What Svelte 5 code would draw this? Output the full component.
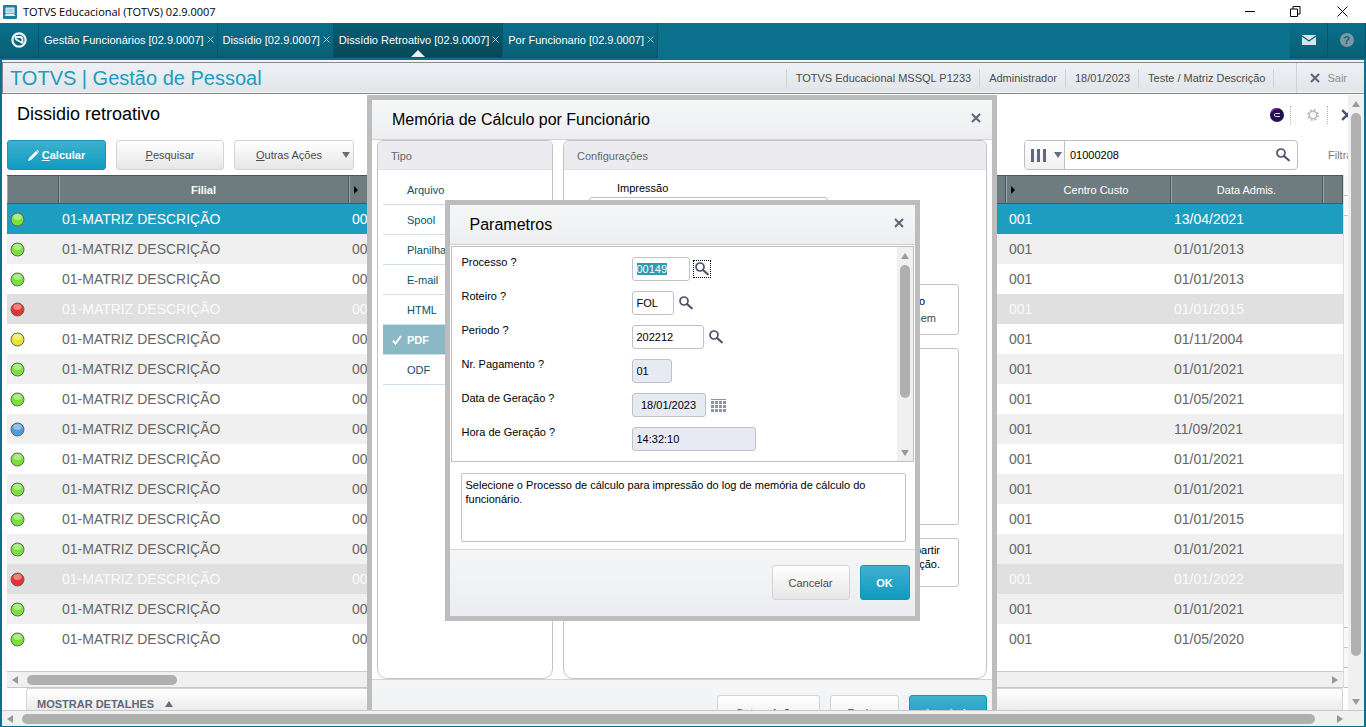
<script lang="ts">
  import { onMount } from "svelte";

  type Status = "green" | "red" | "yellow" | "blue";
  interface Row {
    status: Status;
    date: string;
    selected?: boolean;
  }

  const tabs = [
    { title: "Gestão Funcionários [02.9.0007]", active: false },
    { title: "Dissídio [02.9.0007]", active: false },
    { title: "Dissídio Retroativo [02.9.0007]", active: true },
    { title: "Por Funcionario [02.9.0007]", active: false },
  ];

  const session = ["TOTVS Educacional MSSQL P1233", "Administrador", "18/01/2023", "Teste / Matriz Descrição"];

  const rows: Row[] = [
    { status: "green", date: "13/04/2021", selected: true },
    { status: "green", date: "01/01/2013" },
    { status: "green", date: "01/01/2013" },
    { status: "red", date: "01/01/2015" },
    { status: "yellow", date: "01/11/2004" },
    { status: "green", date: "01/01/2021" },
    { status: "green", date: "01/05/2021" },
    { status: "blue", date: "11/09/2021" },
    { status: "green", date: "01/01/2021" },
    { status: "green", date: "01/01/2021" },
    { status: "green", date: "01/01/2015" },
    { status: "green", date: "01/01/2021" },
    { status: "red", date: "01/01/2022" },
    { status: "green", date: "01/01/2021" },
    { status: "green", date: "01/05/2020" },
  ];

  const outputTypes = ["Arquivo", "Spool", "Planilha", "E-mail", "HTML", "PDF", "ODF"];
  let outputType = $state("PDF");

  let params = $state([
    { id: "processo", label: "Processo ?", value: "00149", size: "w58", lookup: true },
    { id: "roteiro", label: "Roteiro ?", value: "FOL", size: "w42", lookup: true },
    { id: "periodo", label: "Periodo ?", value: "202212", size: "w72", lookup: true },
    { id: "pagamento", label: "Nr. Pagamento ?", value: "01", size: "w40", readonly: true },
    { id: "data", label: "Data de Geração ?", value: "18/01/2023", size: "w74", readonly: true, calendar: true },
    { id: "hora", label: "Hora de Geração ?", value: "14:32:10", size: "w124", readonly: true },
  ]);

  let search = $state("01000208");
  let help = $state("Selecione o Processo de cálculo para impressão do log de memória de cálculo do funcionário.");

  onMount(() => {
    const first = document.getElementById("processo") as HTMLInputElement;
    first.focus();
    first.select();
  });
</script>

{#snippet cross(size: number)}
  <svg width={size} height={size} viewBox="0 0 10 10" aria-hidden="true">
    <path d="M1 1 L9 9 M9 1 L1 9" stroke="currentColor" stroke-width="2" fill="none" />
  </svg>
{/snippet}

{#snippet magnifier()}
  <svg width="14" height="14" viewBox="0 0 14 14" aria-hidden="true">
    <circle cx="5" cy="5" r="4" fill="none" stroke="currentColor" stroke-width="1.700" />
    <path d="M8 8 L12.800 12.300" stroke="currentColor" stroke-width="2.200" stroke-linecap="round" />
  </svg>
{/snippet}

{#snippet arrow(dir: string)}
  <span class="arrow {dir}"></span>
{/snippet}

<div class="window">
  <div class="titlebar">
    <svg width="14" height="14" viewBox="0 0 14 14" aria-hidden="true">
      <rect width="14" height="14" rx="1" fill="#1b7fa0" />
      <rect x="3" y="3" width="8" height="5" fill="#a9d4e0" stroke="#e3f2f6" />
      <path d="M1.500 11 L3 9 H11 L12.500 11 Z" fill="#e3f2f6" />
    </svg>
    <span class="app-name">TOTVS Educacional (TOTVS) 02.9.0007</span>
    <button class="win-btn" aria-label="Minimizar">
      <svg width="11" height="11" viewBox="0 0 11 11"><path d="M0 5.500 H10" stroke="#000" /></svg>
    </button>
    <button class="win-btn" aria-label="Restaurar">
      <svg width="11" height="11" viewBox="0 0 11 11"><path d="M0.500 3 H7.500 V10.500 H0.500 Z M3 3 V0.500 H10 V8 H7.500" stroke="#000" fill="none" /></svg>
    </button>
    <button class="win-btn" aria-label="Fechar">
      <svg width="11" height="11" viewBox="0 0 11 11"><path d="M0.500 0.500 L10.500 10.500 M10.500 0.500 L0.500 10.500" stroke="#000" /></svg>
    </button>
  </div>

  <nav class="tabbar">
    <button class="logo" aria-label="Menu">
      <svg width="16" height="16" viewBox="0 0 16 16">
        <circle cx="8" cy="8" r="6.600" fill="none" stroke="#f2f8fa" stroke-width="2.200" />
        <path d="M4 5 H9 Q11.500 5 11.500 7.500 V11.500 M4.500 5 Q4.500 8 7 8.500 L11.500 11" fill="none" stroke="#f2f8fa" stroke-width="1.800" />
      </svg>
    </button>
    {#each tabs as t (t.title)}
      <div class="tab" class:active={t.active}>
        <button class="tab-title">{t.title}</button>
        <button class="tab-close" aria-label="Fechar aba">
          <svg width="7" height="7" viewBox="0 0 7 7"><path d="M0.500 0.500 L6.500 6.500 M6.500 0.500 L0.500 6.500" stroke="#a5cad5" /></svg>
        </button>
      </div>
    {/each}
    <div class="tools">
      <button class="tool" aria-label="Mensagens">
        <svg width="14" height="10" viewBox="0 0 14 10">
          <rect width="14" height="10" fill="#d9e4e8" />
          <path d="M0 1 L7 6 L14 1" stroke="#0a6478" stroke-width="1.400" fill="none" />
        </svg>
      </button>
      <button class="tool help" aria-label="Ajuda"><span>?</span></button>
    </div>
  </nav>

  <header class="appbar">
    <h1>TOTVS | Gestão de Pessoal</h1>
    {#each session as s (s)}
      <span class="info">{s}</span>
    {/each}
    <button class="exit">{@render cross(10)} Sair</button>
  </header>

  <div class="viewport">
    <main class="page">
      <div class="page-title">
        <h2>Dissidio retroativo</h2>
        <div class="page-icons">
          <button aria-label="Carol">
            <svg width="14" height="14" viewBox="0 0 14 14">
              <circle cx="7" cy="7" r="7" fill="#25104f" />
              <path d="M1.500 4 A6 6 0 0 1 8 1" stroke="#74209a" stroke-width="1.500" fill="none" />
              <path d="M10 5.500 H5.500 Q4.500 5.500 4.500 7 Q4.500 8.500 5.500 8.500 H10" stroke="#e0d4ee" fill="none" />
            </svg>
          </button>
          <button aria-label="Configurações da página">
            <svg width="12" height="12" viewBox="0 0 12 12" fill="none" stroke="#b9bdc3">
              <circle cx="6" cy="6" r="3.700" stroke-width="1.500" />
              <circle cx="6" cy="6" r="5.200" stroke-width="1.600" stroke-dasharray="2.200 1.884" />
            </svg>
          </button>
          <button class="cut" aria-label="Fechar página">{@render cross(12)}</button>
        </div>
      </div>

      <div class="toolbar">
        <button class="btn primary w99">
          <svg width="11" height="11" viewBox="0 0 11 11"><path d="M0 11 L1 8 L8 1 L10 3 L3 10 Z M8.500 0.500 L9.500 0 L11 1.500 L10.500 2.500 Z" fill="#fff" /></svg>
          <span><u>C</u>alcular</span>
        </button>
        <button class="btn w108"><span><u>P</u>esquisar</span></button>
        <button class="btn menu"><span><u>O</u>utras Ações</span>{@render arrow("down dark")}</button>
        <div class="search">
          <button class="columns" aria-label="Colunas">
            <svg width="15" height="13" viewBox="0 0 15 13"><path d="M1.500 0 V13 M7.500 0 V13 M13.500 0 V13" stroke="#5f687c" stroke-width="3" /></svg>
            {@render arrow("down dark")}
          </button>
          <input aria-label="Pesquisa" bind:value={search} />
          <button class="icon" aria-label="Buscar">{@render magnifier()}</button>
        </div>
        <a class="filter" href="#filtrar">Filtrar</a>
      </div>

      <div class="grid-area">
        <div class="grid">
          <table>
            <colgroup>
              <col class="c-icon" /><col class="c-filial" /><col /><col class="c-custo" /><col class="c-date" /><col class="c-end" />
            </colgroup>
            <thead>
              <tr>
                <th></th>
                <th class="strong">Filial</th>
                <th class="first">{@render arrow("right black")}</th>
                <th class="sortable">{@render arrow("right black")}<span>Centro Custo</span></th>
                <th>Data Admis.</th>
                <th></th>
              </tr>
            </thead>
            <tbody>
              {#each rows as r, i (i)}
                <tr class:selected={r.selected} class:inactive={r.status === "red"}>
                  <td>
                    <svg width="15" height="15" viewBox="0 0 15 15" class={r.status}>
                      <circle cx="7.500" cy="7.500" r="6.500" fill="currentColor" stroke="#5c6a5a" />
                      <ellipse cx="7.500" cy="5" rx="4.200" ry="3" fill="#fff" opacity="0.400" />
                    </svg>
                  </td>
                  <td>01-MATRIZ DESCRIÇÃO</td>
                  <td>00</td>
                  <td>001</td>
                  <td>{r.date}</td>
                  <td></td>
                </tr>
              {/each}
            </tbody>
          </table>
          <div class="spacer"></div>
          <div class="hscroll inner">
            {@render arrow("left")}
            <div class="track"><div class="thumb short"></div></div>
            {@render arrow("right")}
          </div>
        </div>
        <div class="side">
          <i></i><i></i><b></b><i></i><i></i><i></i>
        </div>
      </div>
      <button class="details">MOSTRAR DETALHES {@render arrow("up dark")}</button>
    </main>

    <div class="vscroll">
      {@render arrow("up")}
      <div class="track"><div class="thumb tall"></div></div>
      {@render arrow("down")}
    </div>

    <div class="layer">
      <section class="dialog memoria">
        <div class="dialog-head">
          <h3>Memória de Cálculo por Funcionário</h3>
          <button class="icon" aria-label="Fechar">{@render cross(10)}</button>
        </div>
        <div class="panels">
          <div class="panel tipo">
            <h4>Tipo</h4>
            <div class="types">
              {#each outputTypes as t (t)}
                <button class:chosen={t === outputType} onclick={() => (outputType = t)}>
                  {#if t === outputType}
                    <svg width="10" height="10" viewBox="0 0 10 10"><path d="M1 5.500 L3.500 8.500 L9 1" stroke="#fff" stroke-width="2" fill="none" /></svg>
                  {/if}
                  <span>{t}</span>
                </button>
              {/each}
            </div>
          </div>
          <div class="panel config">
            <h4>Configurações</h4>
            <div class="config-body">
              <label for="impressao">Impressão</label>
              <input id="impressao" class="field" />
              <div class="box orient"><span>Orientação</span><span class="gray">Paisagem</span></div>
              <div class="box tall"></div>
              <div class="box note"><span>Gerar a partir</span><span>da configuração.</span></div>
            </div>
          </div>
        </div>
        <div class="dialog-foot">
          <button class="btn w103">Outras Ações</button>
          <button class="btn w69">Fechar</button>
          <button class="btn primary w78">Imprimir</button>
        </div>
      </section>
    </div>

    <div class="layer upper">
      <section class="dialog parametros">
        <div class="dialog-head">
          <h3>Parametros</h3>
          <button class="icon" aria-label="Fechar">{@render cross(10)}</button>
        </div>
        <div class="form">
          <div class="fields">
            {#each params as p, i (p.id)}
              <div class="row">
                <label for={p.id}>{p.label}</label>
                <input id={p.id} class="field {p.size}" class:centered={p.calendar} readonly={p.readonly} bind:value={p.value} />
                {#if p.lookup}
                  <button class="lookup" class:focused={i === 0} aria-label="Consultar">{@render magnifier()}</button>
                {:else if p.calendar}
                  <button class="lookup" aria-label="Calendário">
                    <svg width="15" height="13" viewBox="0 0 15 13" stroke="#8d93a3">
                      <path d="M0 0.500 H15" />
                      <path d="M0 3.500 H15 M0 7.500 H15 M0 11.500 H15" stroke-width="3" stroke-dasharray="3 1" />
                    </svg>
                  </button>
                {/if}
              </div>
            {/each}
          </div>
          <div class="vscroll">
            {@render arrow("up")}
            <div class="track"><div class="thumb mid"></div></div>
            {@render arrow("down")}
          </div>
        </div>
        <div class="help-wrap">
          <textarea aria-label="Ajuda do campo" readonly bind:value={help}></textarea>
        </div>
        <div class="dialog-foot">
          <button class="btn w78">Cancelar</button>
          <button class="btn primary w50">OK</button>
        </div>
      </section>
    </div>
  </div>

  <div class="hscroll outer">
    {@render arrow("left")}
    <div class="track"><div class="thumb"></div></div>
    {@render arrow("right")}
  </div>
</div>

<style>
  :global(body) {
    margin: 0;
    overflow: hidden;
  }

  .window,
  .window * {
    box-sizing: border-box;
  }

  .window {
    display: flex;
    flex-direction: column;
    height: 100vh;
    background: #0a708c;
    font: 11px/14px "Liberation Sans", Arial, sans-serif;
    color: #000;
  }

  h1,
  h2,
  h3,
  h4 {
    margin: 0;
    font-weight: 400;
  }

  button {
    font: inherit;
    color: inherit;
    background: none;
    border: none;
    padding: 0;
    cursor: pointer;
  }

  input,
  textarea {
    font: inherit;
    color: inherit;
    outline: none;
  }

  input::selection {
    background: #2f9ab4;
    color: #fff;
  }

  svg {
    display: block;
    flex: none;
  }

  /* title bar */
  .titlebar {
    display: flex;
    align-items: center;
    height: 23px;
    flex: none;
    padding-left: 3px;
    background: #fff;
  }

  .app-name {
    flex: 1;
    padding-left: 6px;
    font-family: "Open Sans", "Noto Sans", sans-serif;
  }

  .win-btn {
    display: flex;
    justify-content: center;
    width: 45px;
  }

  .win-btn:last-child {
    width: 48px;
  }

  /* tabs */
  .tabbar {
    display: flex;
    height: 37px;
    flex: none;
    padding-bottom: 2px;
    color: #fff;
  }

  .logo,
  .tab,
  .tool {
    display: flex;
    align-items: center;
    justify-content: center;
    background: linear-gradient(#0a6f8b, #095f76);
    border-right: 1px solid #08556b;
    border-bottom: 1px solid #08556b;
  }

  .logo {
    width: 39px;
  }

  .tab {
    position: relative;
    gap: 3px;
    padding: 0 3px 0 5px;
  }

  .tab.active {
    background: linear-gradient(#095e75, #054858);
  }

  .tab.active::after {
    content: "";
    position: absolute;
    bottom: 0;
    left: 50%;
    margin-left: -7px;
    border: 7px solid transparent;
    border-top: none;
    border-bottom-color: #eef1f3;
  }

  .tab-close {
    padding-bottom: 2px;
  }

  .tools {
    display: flex;
    margin-left: auto;
  }

  .tool {
    width: 38px;
  }

  .tool.help span {
    width: 14px;
    border-radius: 7px;
    background: #7c98a3;
    color: #0a6478;
    font-weight: 700;
  }

  /* header */
  .appbar {
    display: flex;
    align-items: center;
    flex: none;
    height: 32px;
    margin: 2px 2px 1px;
    border: 1px solid #878787;
    border-right: none;
    background: linear-gradient(#eef1f4, #e1e4e8);
    box-shadow: 0 -2px #f4f4f4, 0 1px #fff, inset 0 -1px #f4f4f4;
    color: #4c4c4c;
  }

  .appbar h1 {
    flex: 1;
    padding-left: 7px;
    font-size: 20px;
    line-height: 24px;
    color: #1a9dc0;
  }

  .info {
    border-left: 1px solid #d0d3d6;
    padding: 2px 8px 2px 9px;
  }

  .info:nth-of-type(4) {
    border-right: 1px solid #d0d3d6;
  }

  .exit {
    display: flex;
    align-items: center;
    gap: 7px;
    align-self: stretch;
    margin-left: 22px;
    padding: 0 17px 0 13px;
    border-left: 1px solid #d0d3d6;
    color: #8c8f94;
  }

  .exit :global(svg) {
    color: #5b6577;
  }

  /* viewport */
  .viewport {
    position: relative;
    display: flex;
    flex: 1;
    min-height: 0;
    overflow: hidden;
    margin: 0 2px;
    background: #fff;
  }

  .page {
    display: flex;
    flex-direction: column;
    flex: 1;
    min-width: 0;
    padding-left: 5px;
  }

  .page-title {
    display: flex;
    align-items: center;
    justify-content: space-between;
    height: 38px;
    margin-bottom: 7px;
    padding-left: 10px;
    flex: none;
  }

  h2 {
    font-size: 18px;
    line-height: 22px;
  }

  .page-icons {
    display: flex;
    padding-top: 2px;
  }

  .page-icons button {
    display: flex;
    padding: 2px 6px;
    border-right: 1px dotted #b5b5b5;
  }

  .page-icons button:nth-child(2) {
    width: 37px;
    padding: 3px 8px 3px 16px;
  }

  .page-icons .cut {
    width: 20px;
    padding: 3px 0 3px 13px;
    overflow: hidden;
    border: none;
    color: #4a5468;
  }

  .toolbar {
    display: flex;
    flex: none;
    gap: 10px;
    height: 30px;
    margin-bottom: 5px;
  }

  .btn {
    display: inline-flex;
    align-items: center;
    justify-content: center;
    gap: 3px;
    border: 1px solid #d4d4d4;
    border-radius: 3px;
    background: linear-gradient(#fff, #e6e6e6);
    color: #4c4c4c;
  }

  .btn.primary {
    border-color: #1b93b3;
    background: linear-gradient(#3fb0ce, #0f9bc0);
    color: #fff;
    font-weight: 700;
  }

  .btn.menu {
    width: 120px;
    gap: 20px;
    padding: 0 2px 0 20px;
  }

  .w50 { width: 50px; }
  .w69 { width: 69px; }
  .w78 { width: 78px; }
  .w99 { width: 99px; }
  .w103 { width: 103px; }
  .w108 { width: 108px; }
  .w40 { width: 40px; }
  .w42 { width: 42px; }
  .w58 { width: 58px; }
  .w72 { width: 72px; }
  .w74 { width: 74px; }
  .w124 { width: 124px; }

  .search {
    display: flex;
    width: 274px;
    margin-left: auto;
    border: 1px solid #bfbfbf;
    border-radius: 4px;
    overflow: hidden;
  }

  .columns {
    display: flex;
    align-items: center;
    gap: 8px;
    width: 40px;
    padding-left: 6px;
    border-right: 1px solid #bfbfbf;
    background: linear-gradient(#fff, #f0f0f0);
  }

  .search input {
    flex: 1;
    min-width: 0;
    border: none;
    padding: 0 5px;
  }

  .icon {
    padding: 0 7px;
    color: #4a5468;
  }

  .filter {
    width: 20px;
    margin-left: 20px;
    overflow: hidden;
    line-height: 30px;
    color: #777;
    text-decoration: none;
  }

  /* arrows */
  .arrow {
    display: block;
    flex: none;
    border: 4px solid transparent;
    color: #999;
  }

  .arrow.dark { color: #666e7d; }
  .arrow.black { color: #000; }
  .up { border-top: none; border-bottom: 6px solid; }
  .down { border-bottom: none; border-top: 6px solid; }
  .left { border-left: none; border-right: 6px solid; }
  .right { border-right: none; border-left: 6px solid; }
  .up, .down { border-left-color: transparent; border-right-color: transparent; }
  .left, .right { border-top-color: transparent; border-bottom-color: transparent; }
  .right.black { border-left-width: 4px; }

  /* grid */
  .grid-area {
    display: flex;
    flex: 1;
    min-height: 0;
  }

  .grid {
    display: flex;
    flex-direction: column;
    flex: 1;
    min-width: 0;
  }

  table {
    width: 100%;
    table-layout: fixed;
    border-collapse: separate;
    border-spacing: 0;
  }

  .c-icon { width: 52px; }
  .c-filial { width: 290px; }
  .c-custo { width: 165px; }
  .c-date { width: 152px; }
  .c-end { width: 20px; }

  th {
    height: 29px;
    padding: 0;
    border-top: 1px solid #4d5659;
    border-bottom: 1px solid #4d5659;
    border-right: 1px solid #4d5659;
    background: #6e7c80;
    box-shadow: inset 1px 0 #9aa5a8;
    color: #fff;
    font-weight: 400;
  }

  th.strong {
    font-weight: 700;
  }

  th.first {
    padding-left: 5px;
  }

  th.sortable {
    position: relative;
    padding-left: 16px;
  }

  th.sortable .arrow {
    position: absolute;
    left: 5px;
    top: 10px;
  }

  td {
    height: 30px;
    padding: 0 3px;
    font-size: 14px;
    line-height: 18px;
    color: #666;
    white-space: nowrap;
  }

  tr:nth-child(even) td {
    background: #f0f0f0;
  }

  tr.inactive td {
    background: #e0e0e0;
    color: #fafafa;
  }

  tr.selected td {
    background: #1d9dbf;
    color: #fff;
  }

  .green { color: #7be03a; }
  .red { color: #e83131; }
  .yellow { color: #ebe32c; }
  .blue { color: #4a9be0; }

  .spacer {
    flex: 1;
  }

  .side {
    display: flex;
    flex-direction: column;
    width: 5px;
    padding-top: 1px;
    border-left: 1px solid #dcdce2;
    background: #f8f8fb;
  }

  .side i {
    height: 20px;
    border-bottom: 1px solid #c6c6ca;
  }

  .side b {
    flex: 1;
    border-bottom: 1px solid #c6c6ca;
  }

  /* scroll bars */
  .hscroll {
    display: flex;
    align-items: center;
    flex: none;
    height: 17px;
    gap: 9px;
    padding: 0 5px;
    border-top: 1px solid #c8c8c8;
    background: #f0f0f0;
  }

  .hscroll.inner {
    border-bottom: 1px solid #c8c8c8;
  }

  .hscroll.outer {
    height: 16px;
    margin: 0 2px 1px;
    padding-right: 21px;
  }

  .hscroll.outer .track {
    padding-right: 13px;
  }

  .vscroll {
    display: flex;
    flex-direction: column;
    align-items: center;
    flex: none;
    gap: 6px;
    width: 16px;
    padding: 6px 0 5px;
    background: #f0f0f0;
  }

  .track {
    flex: 1;
  }

  .thumb {
    height: 10px;
    border-radius: 5px;
    background: #b0b0b0;
  }

  .thumb.short {
    width: 150px;
  }

  .vscroll .thumb {
    width: 10px;
  }

  .thumb.tall {
    height: 543px;
  }

  .thumb.mid {
    height: 133px;
  }

  .details {
    display: flex;
    align-items: center;
    flex: none;
    gap: 11px;
    height: 22px;
    margin: 0 5px 0 19px;
    padding: 8px 10px 0;
    border: 1px solid #d4d4d4;
    border-bottom: none;
    border-radius: 3px 3px 0 0;
    background: linear-gradient(#fff, #ebebeb);
    color: #5f6878;
    font-weight: 700;
  }

  /* dialogs */
  .layer {
    position: absolute;
    inset: 0;
    display: flex;
    align-items: flex-start;
    justify-content: center;
    padding-right: 2px;
    pointer-events: none;
  }

  .layer.upper {
    padding-top: 105px;
  }

  .dialog {
    pointer-events: auto;
    border: 5px solid #bdbdbd;
    background: #fff;
  }

  .memoria {
    width: 630px;
  }

  .parametros {
    width: 475px;
  }

  .dialog-head {
    display: flex;
    align-items: center;
    justify-content: space-between;
    height: 40px;
    padding: 1px 4px 0 20px;
    border-bottom: 1px solid #d0d0d0;
    background: linear-gradient(#f5f7f7, #edeef1);
  }

  h3 {
    font-size: 16px;
    line-height: 20px;
  }

  .dialog-head .icon {
    margin-bottom: 5px;
    color: #5b6577;
  }

  .dialog-foot {
    display: flex;
    justify-content: flex-end;
    gap: 10px;
    padding: 15px 5px 16px;
    border-top: 1px solid #d4d4d4;
    background: linear-gradient(#f5f7f7, #ecedf0);
  }

  .dialog-foot .btn {
    height: 35px;
  }

  .panels {
    display: flex;
    gap: 10px;
    height: 539px;
    padding: 0 5px;
  }

  .panel {
    border: 1px solid #c4c4c4;
    border-radius: 6px 6px 10px 10px;
    overflow: hidden;
  }

  .tipo {
    width: 176px;
  }

  .config {
    flex: 1;
  }

  h4 {
    height: 29px;
    padding-left: 13px;
    border-bottom: 1px solid #e0e0e4;
    background: #ebebf0;
    font-size: 11px;
    line-height: 30px;
    color: #666;
  }

  .types {
    display: flex;
    flex-direction: column;
    padding: 5px;
  }

  .types button {
    display: flex;
    align-items: center;
    height: 30px;
    border-bottom: 1px solid #cfdfec;
    color: #0c5068;
  }

  .types svg {
    margin: 0 -19px 0 9px;
  }

  .types span {
    padding-left: 24px;
  }

  .types .chosen {
    background: #8ab8c4;
    color: #fff;
    font-weight: 700;
  }

  .config-body {
    display: flex;
    flex-direction: column;
    align-items: flex-start;
    padding: 11px 27px 0 25px;
  }

  .config-body label {
    padding-left: 28px;
  }

  .config-body .field {
    width: 239px;
    margin: 2px 0 63px;
  }

  .box {
    display: flex;
    flex-direction: column;
    align-items: flex-end;
    width: 100%;
    border: 1px solid #c4c4c4;
    border-radius: 3px;
    margin-bottom: 13px;
  }

  .orient {
    height: 51px;
    padding: 9px 22px 0;
    gap: 3px;
  }

  .orient span:first-child {
    padding-right: 11px;
  }

  .gray {
    color: #444;
  }

  .box.tall {
    height: 177px;
  }

  .note {
    height: 49px;
    padding: 4px 18px 0;
  }

  .field {
    height: 24px;
    padding: 0 4px;
    border: 1px solid #bfc3c6;
    border-radius: 3px;
    background: #fff;
  }

  .field[readonly] {
    background: #e7eaf2;
  }

  .field.centered {
    text-align: center;
  }

  .form {
    display: flex;
    margin: 1px 1px 0;
    border: 1px solid #c0c0c0;
    height: 216px;
    overflow: hidden;
  }

  .fields {
    display: flex;
    flex-direction: column;
    gap: 10px;
    flex: 1;
    padding: 10px 10px 0;
  }

  .row {
    display: flex;
    align-items: center;
    height: 24px;
  }

  .row label {
    width: 170px;
    align-self: flex-start;
    margin-top: -2px;
  }

  .lookup {
    margin-left: 3px;
    padding: 1px;
    border: 1px solid transparent;
    color: #4a5468;
  }

  .lookup.focused {
    border: 1px dotted #000;
  }

  .help-wrap {
    display: flex;
    padding: 11px 9px 7px 11px;
  }

  textarea {
    flex: 1;
    height: 69px;
    padding: 4px;
    border: 1px solid #bfc3c6;
    border-radius: 2px;
    resize: none;
  }
</style>
